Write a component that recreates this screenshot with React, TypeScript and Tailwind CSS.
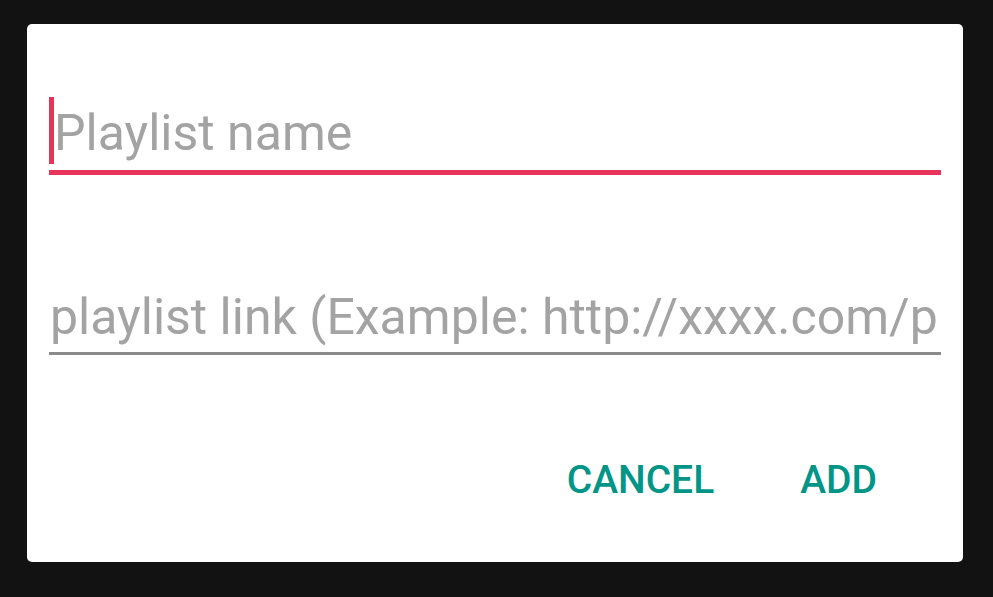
import React from "react"

const App = () => {
  return (
    <div
      className="w-[993px] h-[597px] bg-[#121212] pt-[24px] pl-[27px]"
      style={{ fontFamily: "Roboto, 'Liberation Sans', sans-serif" }}
    >
      <div className="w-[936px] h-[538px] bg-white rounded-[5px] px-[22px] pt-[73px] flex flex-col">
        {/* name field, focused */}
        <div className="flex items-center h-[67px]">
          <div className="w-[5px] h-[67px] bg-[#e8335a]" />
          <span className="text-[50px] leading-none text-[#a3a3a3] whitespace-nowrap pt-[4px]">
            Playlist name
          </span>
        </div>
        <div className="h-[5px] mt-[6px] bg-[#e8335a]" />

        {/* link field */}
        <div className="mt-[112px] overflow-hidden h-[65px] flex items-center">
          <span className="text-[50px] leading-none text-[#a3a3a3] whitespace-nowrap pl-[1px] pb-[6px]">
            playlist link (Example: http://xxxx.com/p
          </span>
        </div>
        <div className="h-[3px] bg-[#8a8a8a]" />

        <div className="flex justify-end gap-[86px] pr-[64px] mt-[106px]">
          <button className="text-[39px] font-medium text-[#009587] leading-none">
            CANCEL
          </button>
          <button className="text-[39px] font-medium text-[#009587] leading-none">
            ADD
          </button>
        </div>
      </div>
    </div>
  )
}

export default App
